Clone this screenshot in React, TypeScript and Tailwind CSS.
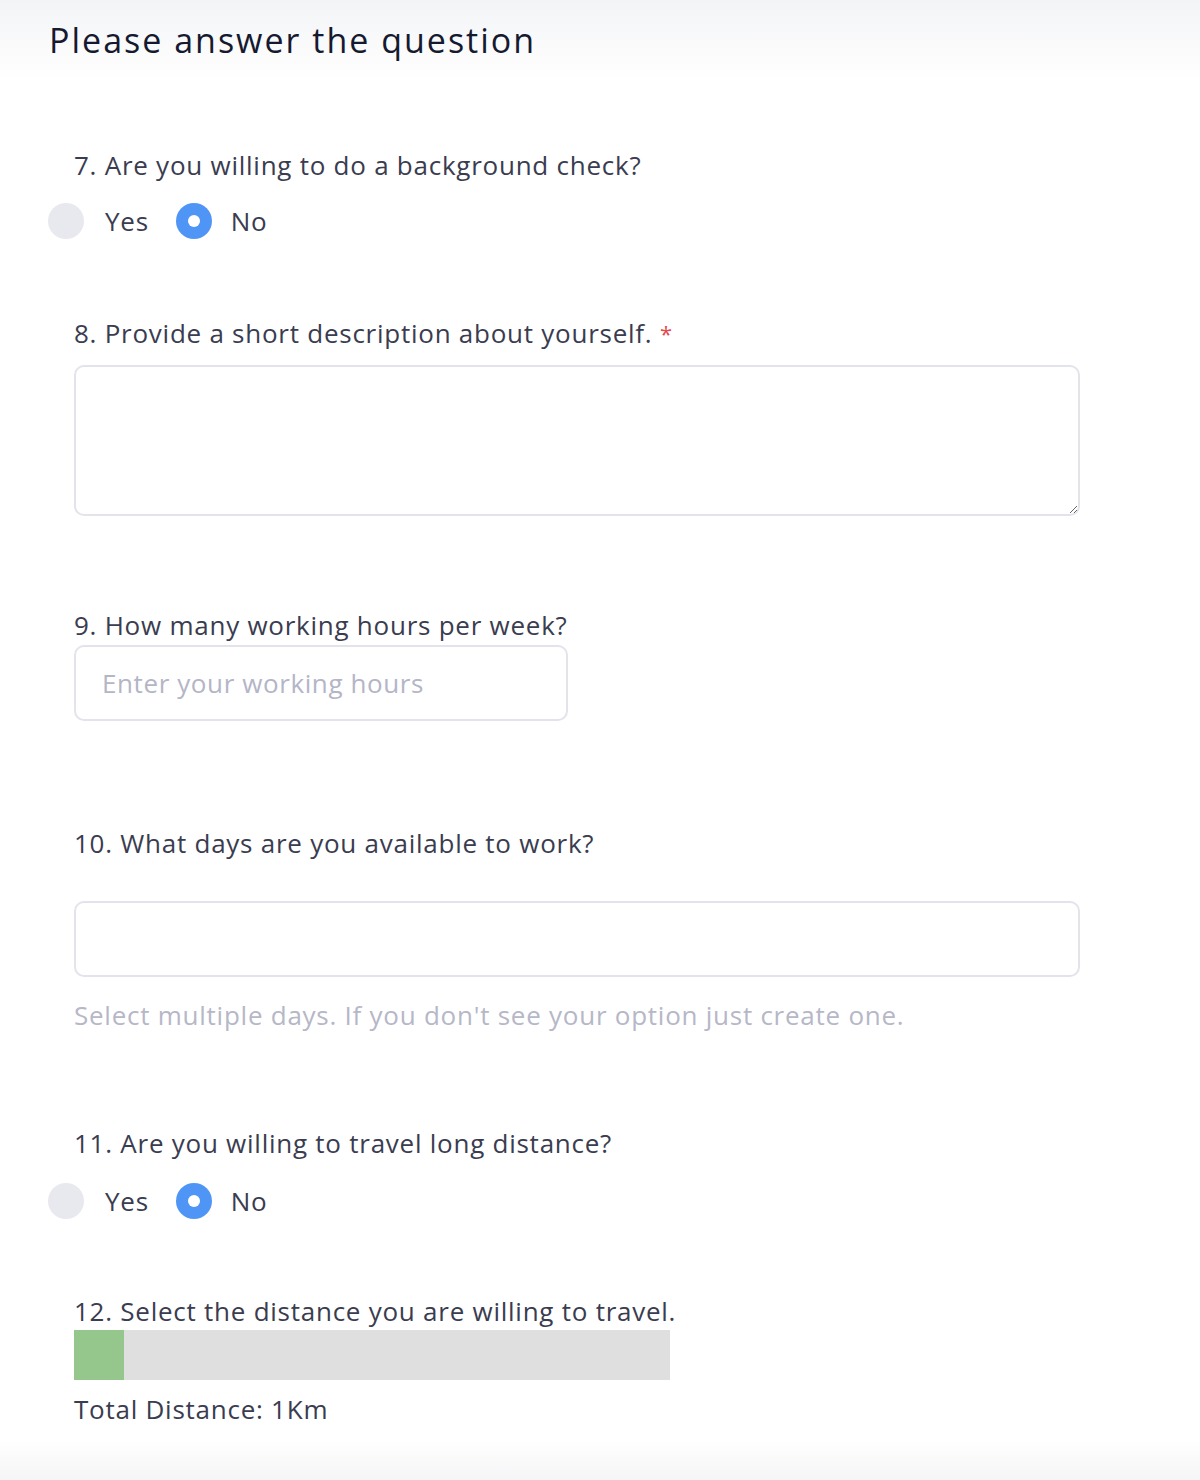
import React from "react";

const font = { fontFamily: '"Open Sans", "Liberation Sans", sans-serif' };

function Radio({ checked }: { checked?: boolean }) {
  return checked ? (
    <span className="flex h-[36px] w-[36px] items-center justify-center rounded-full bg-[#4f95f5]">
      <span className="h-[12px] w-[12px] rounded-full bg-white" />
    </span>
  ) : (
    <span className="h-[36px] w-[36px] rounded-full bg-[#e8e9ef]" />
  );
}

function YesNo() {
  return (
    <div className="flex h-[36px] items-center pl-[48px] text-[26px] tracking-[0.75px] text-[#3a3c50]">
      <Radio />
      <span className="ml-[21px] leading-[36px]">Yes</span>
      <span className="ml-[27px]">
        <Radio checked />
      </span>
      <span className="ml-[19px] leading-[36px]">No</span>
    </div>
  );
}

export default function App() {
  return (
    <div
      style={font}
      className="w-[1200px] h-[1480px] bg-[linear-gradient(to_bottom,#f3f4f6_0px,#ffffff_80px,#ffffff_1440px,#f5f5f7_1480px)] text-[#3a3c50] tracking-[0.75px]"
    >
      <div className="pt-[16px]">
        <h1 className="pl-[49px] text-[34px] font-medium leading-[48px] tracking-[2px] text-[#161a30]">
          Please answer the question
        </h1>

        <div className="pl-[74px] mt-[83px] text-[26px] leading-[36px]">
          7. Are you willing to do a background check?
        </div>
        <div className="mt-[20px]">
          <YesNo />
        </div>

        <div className="pl-[74px] mt-[76px] text-[26px] leading-[36px]">
          8. Provide a short description about yourself.{" "}
          <span className="text-[#e5484d] text-[22px] align-top">*</span>
        </div>
        <div className="pl-[74px] mt-[14px]">
          <textarea className="block h-[151px] w-[1006px] rounded-[10px] border-2 border-[#e3e4eb] bg-white outline-none" />
        </div>

        <div className="pl-[74px] mt-[91px] text-[26px] leading-[36px]">
          9. How many working hours per week?
        </div>
        <div className="pl-[74px] mt-[2px]">
          <input
            placeholder="Enter your working hours"
            className="block h-[76px] w-[494px] rounded-[10px] border-2 border-[#e3e4eb] bg-white px-[26px] text-[26px] tracking-[0.6px] outline-none placeholder:text-[#b4b5c6]"
          />
        </div>

        <div className="pl-[74px] mt-[104px] text-[26px] leading-[36px]">
          10. What days are you available to work?
        </div>
        <div className="pl-[74px] mt-[40px]">
          <div className="h-[76px] w-[1006px] rounded-[10px] border-2 border-[#e3e4eb] bg-white" />
        </div>
        <div className="pl-[74px] mt-[20px] text-[26px] leading-[36px] text-[#b6b7c7]">
          Select multiple days. If you don't see your option just create one.
        </div>

        <div className="pl-[74px] mt-[92px] text-[26px] leading-[36px]">
          11. Are you willing to travel long distance?
        </div>
        <div className="mt-[22px]">
          <YesNo />
        </div>

        <div className="pl-[74px] mt-[74px] text-[26px] leading-[36px]">
          12. Select the distance you are willing to travel.
        </div>
        <div className="pl-[74px] mt-[1px]">
          <div className="flex h-[50px] w-[596px] bg-[#dfdfdf]">
            <div className="h-full w-[50px] bg-[#95c68b]" />
          </div>
        </div>
        <div className="pl-[74px] mt-[11px] text-[26px] leading-[36px]">
          Total Distance: 1Km
        </div>
      </div>
    </div>
  );
}
